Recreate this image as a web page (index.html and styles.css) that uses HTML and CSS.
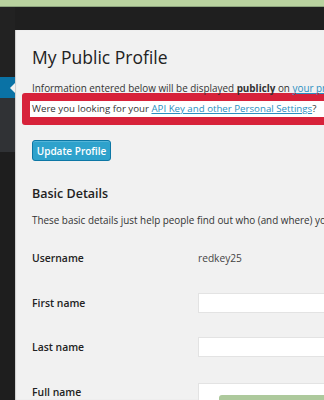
FILE: index.html
```html
<!DOCTYPE html>
<html lang="en">

<head>
  <meta charset="UTF-8">
  <meta name="viewport" content="width=device-width, initial-scale=1.0">
  <title>My Public Profile</title>
  <link rel="stylesheet" href="styles.css">
</head>

<body>
  <div class="top-strip"></div>

  <div class="layout">
    <!-- Admin menu, collapsed -->
    <nav class="admin-menu">
      <div class="menu-block menu-top"></div>
      <div class="menu-block menu-current"></div>
      <div class="menu-block menu-sub"></div>
      <div class="menu-block menu-rest"></div>
    </nav>

    <main class="panel">
      <h1 class="page-title">My Public Profile</h1>
      <p class="intro">Information entered below will be displayed <strong>publicly</strong> on <a href="#">your profile</a>.</p>

      <div class="highlight">
        <p class="notice">Were you looking for your <a href="#">API Key and other Personal Settings</a>?</p>
      </div>

      <div class="actions">
        <button class="button-primary">Update Profile</button>
      </div>

      <h2 class="section-title">Basic Details</h2>
      <p class="section-desc">These basic details just help people find out who (and where) you are.</p>

      <div class="form-table">
        <div class="form-row">
          <label class="form-label">Username</label>
          <span class="form-value">redkey25</span>
        </div>
        <div class="form-row">
          <label class="form-label" for="first">First name</label>
          <input class="form-input" id="first" type="text">
        </div>
        <div class="form-row">
          <label class="form-label" for="last">Last name</label>
          <input class="form-input" id="last" type="text">
        </div>
        <div class="form-row">
          <label class="form-label" for="full">Full name</label>
          <div class="field-wrap">
            <input class="form-input" id="full" type="text">
            <!-- overlapping green popup -->
            <div class="green-tab"></div>
          </div>
        </div>
      </div>
    </main>
  </div>
</body>

</html>
```

FILE: styles.css
```css
/* Page base */
body {
  margin: 0;
  padding: 0;
  width: 324px;
  height: 400px;
  overflow: hidden;
  background-color: #1f1f1f;
  font-family: "Open Sans", "DejaVu Sans", sans-serif;
  color: #333;
}

/* Green band at the very top */
.top-strip {
  height: 6px;
  background-color: #b9d29f;
  border-bottom: 1px solid #8ea57e;
}

.layout {
  display: flex;
  height: 393px;
}

/* Collapsed admin menu */
.admin-menu {
  width: 15px;
  flex-shrink: 0;
  display: flex;
  flex-direction: column;
}

.menu-top {
  height: 70px;
  background-color: #222;
}

.menu-current {
  position: relative;
  height: 21px;
  background-color: #0a72a5;
}

/* little arrow pointing to the panel */
.menu-current::after {
  content: "";
  position: absolute;
  right: 0;
  top: 6px;
  border-top: 5px solid transparent;
  border-bottom: 5px solid transparent;
  border-right: 5px solid #f1f1f1;
}

.menu-sub {
  height: 54px;
  background-color: #303235;
}

.menu-rest {
  flex: 1;
  background-color: #1e1e1e;
}

/* Main content panel */
.panel {
  flex: 1;
  min-width: 0;
  margin-top: 23px;
  background-color: #f1f1f1;
  padding: 0 0 0 17px;
  overflow: hidden;
  box-shadow: inset 1px 0 1px rgba(0, 0, 0, 0.15);
}

.page-title {
  margin: 14px 0 0;
  font-size: 17.5px;
  font-weight: 400;
  line-height: 26px;
  color: #222;
  white-space: nowrap;
}

.intro {
  margin: 10px 0 0;
  font-size: 9.9px;
  line-height: 16px;
  white-space: nowrap;
}

a {
  color: #2a8fc1;
}

/* Red box drawn around the notice */
.highlight {
  margin: -3px 0 0 -10px;
  width: 330px;
  border: 8px solid #d7223a;
  border-radius: 3px;
  background-color: #fff;
}

.notice {
  margin: 0;
  padding-left: 2px;
  font-size: 9.7px;
  line-height: 16px;
  white-space: nowrap;
}

.actions {
  display: flex;
  margin-top: 15px;
}

.button-primary {
  height: 21px;
  width: 79px;
  padding: 0;
  background-color: #2ea2cc;
  border: 1px solid #0d77a5;
  border-radius: 3px;
  color: #fff;
  font-family: "Open Sans", "DejaVu Sans", sans-serif;
  font-size: 10px;
  font-weight: 600;
  box-shadow: inset 0 1px 0 rgba(120, 200, 230, 0.5);
}

.section-title {
  margin: 24px 0 0;
  font-size: 12.5px;
  font-weight: 600;
  line-height: 18px;
  color: #222;
}

.section-desc {
  margin: 9px 0 0;
  font-size: 9.9px;
  line-height: 16px;
  white-space: nowrap;
}

/* Form rows */
.form-table {
  margin-top: 8px;
}

.form-row {
  display: flex;
  align-items: center;
  height: 44.5px;
}

.form-label {
  width: 166px;
  flex-shrink: 0;
  font-size: 10.4px;
  font-weight: 600;
  color: #222;
}

.form-value {
  font-size: 10.2px;
  color: #444;
}

.form-input {
  width: 200px;
  height: 20px;
  box-sizing: border-box;
  margin: 0;
  border: 1px solid #e3e3e3;
  background-color: #fff;
}

.field-wrap {
  position: relative;
}

.green-tab {
  position: absolute;
  left: 21px;
  top: 14px;
  width: 200px;
  height: 20px;
  background-color: #adc99c;
  border-radius: 3px 0 0 0;
}
```
